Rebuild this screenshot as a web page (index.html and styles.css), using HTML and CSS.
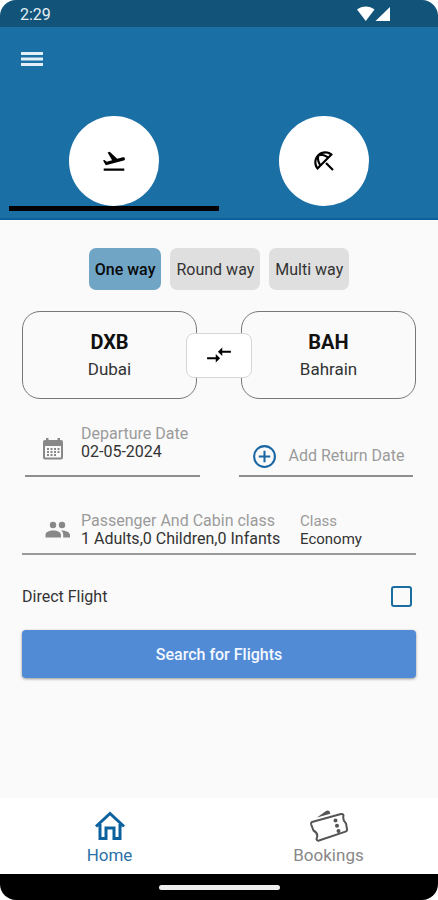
FILE: index.html
```html
<!DOCTYPE html>
<html lang="en">
<head>
<meta charset="utf-8">
<meta name="viewport" content="width=device-width, initial-scale=1">
<title>Flights</title>
<link rel="stylesheet" href="styles.css">
</head>
<body>
<div class="screen">
  <div class="status">
    <span>2:29</span>
    <svg class="signals" viewBox="0 0 34 16" aria-hidden="true">
      <path d="M0 3.6C5-.6 12.500-.6 17.500 3.600L8.800 15z"/>
      <path d="M18.500 15 33 1V15z"/>
    </svg>
  </div>
  <header class="header">
    <button class="menu" aria-label="Menu">
      <svg viewBox="0 0 22 16" aria-hidden="true"><path d="M0 1h22v3H0zM0 6.500h22v3H0zM0 12h22v3H0z"/></svg>
    </button>
    <nav class="tabs">
      <button class="tab active" aria-label="Flights">
        <span class="disc"><svg viewBox="0 0 24 24" aria-hidden="true"><path d="M2.500 19h19v2h-19zm19.570-9.360c-.21-.8-1.040-1.280-1.840-1.060L14.920 10l-6.900-6.430-1.930.51 4.140 7.170-4.970 1.330-1.970-1.540-1.450.39 2.590 4.490L21 11.490c.81-.23 1.280-1.050 1.070-1.850z"/></svg></span>
      </button>
      <button class="tab" aria-label="Holidays">
        <span class="disc"><svg viewBox="0 0 24 24" aria-hidden="true"><path d="M21 19.570l-1.427 1.428-6.442-6.442 1.430-1.428zM13.120 3c-2.580 0-5.160.98-7.140 2.950l-.01.01c-3.950 3.950-3.950 10.360 0 14.310l14.300-14.310C18.300 3.990 15.710 3 13.120 3zM6.140 17.270C5.400 16.030 5 14.610 5 13.120c0-.93.16-1.820.46-2.670.19 1.910.89 3.790 2.070 5.440l-1.390 1.380zm2.840-2.840C7.630 12.380 7.120 9.930 7.600 7.600c.58-.12 1.160-.18 1.750-.18 1.800 0 3.550.55 5.080 1.560l-5.450 5.450zm1.470-8.970c.85-.3 1.740-.46 2.670-.46 1.490 0 2.910.4 4.150 1.140l-1.390 1.390c-1.650-1.180-3.520-1.880-5.430-2.070z"/></svg></span>
      </button>
    </nav>
  </header>
  <main class="main">
    <div class="chips">
      <button class="chip selected">One way</button>
      <button class="chip">Round way</button>
      <button class="chip">Multi way</button>
    </div>
    <div class="route">
      <button class="place"><span class="code">DXB</span><span class="city">Dubai</span></button>
      <button class="place"><span class="code">BAH</span><span class="city">Bahrain</span></button>
      <button class="swap" aria-label="Swap airports">
        <svg viewBox="0 0 24 24" aria-hidden="true"><path d="M9.010 14H1v2h8.010v3L13 15l-3.990-4v3zm5.980-1v-3H23V8h-8.010V5L11 9l3.990 4z"/></svg>
      </button>
    </div>
    <div class="dates">
      <button class="field">
        <svg class="calendar" viewBox="0 0 22 24" aria-hidden="true">
          <path fill-rule="evenodd" d="M4 1h2.500v2h9V1H18v2h1q2 0 2 2v15.500q0 2-2 2H3q-2 0-2-2V5q0-2 2-2h1zM3 9v11.500h16V9z"/>
          <path d="M5 11h2v2H5zM8.500 11h2v2h-2zM12 11h2v2h-2zM15.500 11h2v2h-2zM5 14h2v2H5zM8.500 14h2v2h-2zM12 14h2v2h-2zM15.500 14h2v2h-2zM5 17h2v2H5zM8.500 17h2v2h-2zM12 17h2v2h-2z"/>
        </svg>
        <span class="lines"><span class="label">Departure Date</span><span class="value">02-05-2024</span></span>
      </button>
      <button class="field return">
        <svg class="plus" viewBox="0 0 24 24" aria-hidden="true"><circle cx="12" cy="12" r="10"/><path d="M12 6.500v11M6.500 12h11"/></svg>
        <span class="label">Add Return Date</span>
      </button>
    </div>
    <button class="travellers">
      <svg class="people" viewBox="0 0 26 18" aria-hidden="true">
        <circle cx="8" cy="4" r="3.200"/><circle cx="17" cy="4" r="3.200"/>
        <path d="M.5 16.500v-2.500c0-2.800 3.500-4.500 7.800-4.500s7.700 1.700 7.700 4.500v2.500zM16 9.500c5 0 9 1.500 9 4.800v2.200h-6.800v-2.700c0-1.800-.8-3.300-2.200-4.300z"/>
      </svg>
      <span class="lines"><span class="label">Passenger And Cabin class</span><span class="value">1 Adults,0 Children,0 Infants</span></span>
      <span class="lines cabin"><span class="label">Class</span><span class="value">Economy</span></span>
    </button>
    <label class="direct">Direct Flight<input type="checkbox"></label>
    <button class="search">Search for Flights</button>
  </main>
  <nav class="bottom">
    <a class="home" href="#home">
      <svg viewBox="0 0 38 38" aria-hidden="true"><path d="M5 19.500 19 6.500l14 13M9 17v14.500h6V21h8v10.500h6V17"/></svg>
      Home
    </a>
    <a href="#bookings">
      <svg class="ticket" viewBox="0 0 38 38" aria-hidden="true">
        <path d="M2 15 31 7Q33 6.500 33.500 8.500c-1 4 .3 6 2.500 8l1 5.500q.3 2-1.500 2.600L9 33.500q-2 .6-2.500-1.500c1.700-3.800.7-6.500-3-8.500L1.200 17.500q-.4-2 .8-2.500z"/>
        <path class="solid" d="M7 10.500 16 4q2-1.300 3.500.3l.8 2.400z"/>
        <path class="dots" d="M25.500 13.500v.1M27 18.700v.1M28.500 24v.1"/>
      </svg>
      Bookings
    </a>
  </nav>
  <div class="gesture"><span></span></div>
</div>
</body>
</html>
```

FILE: styles.css
```css
* { box-sizing: border-box; }

body {
  margin: 0;
  background: #fff;
  font-family: Roboto, "Liberation Sans", sans-serif;
  font-size: 16px;
  color: #333;
}

button {
  font: inherit;
  color: inherit;
  background: none;
  border: 0;
  padding: 0;
  text-align: left;
}

svg { display: block; flex: none; }

.screen {
  min-height: 100vh;
  display: flex;
  flex-direction: column;
  background: #fafafa;
  border-radius: 16px;
  overflow: hidden;
}

.status {
  height: 27px;
  padding: 1px 47px 0 20px;
  display: flex;
  align-items: center;
  justify-content: space-between;
  background: #115379;
  color: #e6eef4;
}

.signals { width: 34px; height: 16px; fill: #fff; }

.header {
  background: #1a6fa5;
  border-bottom: 2px solid #0d609b;
  padding: 24px 9px 7px;
}

.menu { display: block; margin-left: 12px; }
.menu svg { width: 22px; height: 16px; fill: #e3eff8; }

.tabs { display: flex; margin-top: 49px; }

.tab {
  flex: 1;
  display: flex;
  justify-content: center;
  border-bottom: 5px solid transparent;
}
.tab.active { border-bottom-color: #000; }

.disc {
  width: 90px;
  height: 90px;
  border-radius: 50%;
  background: #fff;
  display: flex;
  align-items: center;
  justify-content: center;
}
.disc svg { width: 26px; height: 26px; }

.main { flex: 1; padding: 28px 22px; }

.chips { display: flex; justify-content: center; gap: 9px; }

.chip {
  height: 42px;
  padding: 0 6px;
  border-radius: 7px;
  background: #dfdfdf;
}
.chip.selected { background: #70a5c5; color: #0a0a0a; font-weight: 500; }

.route {
  position: relative;
  display: flex;
  gap: 44px;
  margin-top: 21px;
}

.place {
  flex: 1;
  height: 88px;
  border: 1px solid #777;
  border-radius: 18px;
  display: flex;
  flex-direction: column;
  align-items: center;
  justify-content: center;
}
.code { font-size: 20px; line-height: 28px; font-weight: 700; color: #111; }
.city { font-size: 17px; line-height: 26px; }

.swap {
  position: absolute;
  inset: 0;
  margin: auto;
  width: 66px;
  height: 45px;
  background: #fff;
  border: 1px solid #d6d6d6;
  border-radius: 8px;
  display: flex;
  align-items: center;
  justify-content: center;
}
.swap svg { width: 26px; height: 26px; fill: #000; }

.dates {
  display: grid;
  grid-template-columns: 1fr 1fr;
  gap: 39px;
  margin: 21px 3px 0;
}

.field {
  height: 57px;
  padding: 0 0 14px 16px;
  display: flex;
  align-items: flex-end;
  gap: 16px;
  border-bottom: 2px solid #8e8e8e;
}
.field.return { align-items: center; padding: 17px 0 0 13px; gap: 12px; }

.lines { display: flex; flex-direction: column; }
.label { color: #9a9a9a; line-height: 18px; white-space: nowrap; }
.value { line-height: 18px; white-space: nowrap; }

.calendar { width: 24px; height: 24px; fill: #888; }
.plus { width: 25px; height: 25px; fill: none; stroke: #1a66a3; stroke-width: 2; }

.travellers {
  width: 100%;
  margin-top: 35px;
  padding: 0 0 5px 23px;
  display: flex;
  align-items: center;
  border-bottom: 2px solid #999;
}
.people { width: 26px; height: 18px; margin-right: 10px; fill: #888; }
.cabin { margin-left: auto; width: 116px; }
.cabin .label, .cabin .value { font-size: 15px; }

.direct {
  margin-top: 31px;
  padding-right: 4px;
  display: flex;
  align-items: center;
  justify-content: space-between;
}
.direct input {
  appearance: none;
  width: 21px;
  height: 21px;
  margin: 0;
  border: 2px solid #1b6c9f;
  border-radius: 3px;
}

.search {
  display: block;
  width: 100%;
  height: 48px;
  margin-top: 23px;
  border-radius: 4px;
  background: #528bd5;
  box-shadow: 0 1px 3px #0006;
  color: #f4f8ff;
  font-weight: 500;
  text-align: center;
}

.bottom {
  display: flex;
  height: 76px;
  background: #fff;
}
.bottom a {
  flex: 1;
  display: flex;
  flex-direction: column;
  align-items: center;
  padding-top: 9px;
  color: #888;
  font-size: 17px;
  line-height: 20px;
  text-decoration: none;
}
.bottom a.home { color: #2c70a8; }
.bottom svg {
  width: 38px;
  height: 38px;
  fill: none;
  stroke: #555;
  stroke-width: 2;
  stroke-linecap: round;
}
.bottom .home svg { stroke: #0b609e; stroke-width: 3; stroke-linecap: butt; }
.bottom .solid { fill: #555; stroke: none; }
.bottom .dots { stroke-width: 4; }

.gesture {
  height: 26px;
  background: #000;
  display: flex;
  align-items: center;
  justify-content: center;
}
.gesture span { width: 121px; height: 5px; border-radius: 3px; background: #eee; }
```
